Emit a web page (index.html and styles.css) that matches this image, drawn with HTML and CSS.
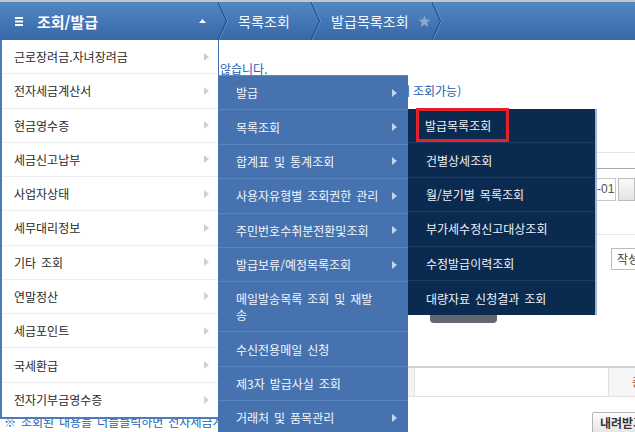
FILE: index.html
```html
<!DOCTYPE html>
<html lang="ko">
<head>
<meta charset="utf-8">
<title>조회/발급</title>
<link rel="stylesheet" href="styles.css">
</head>
<body>
<header class="topbar">
  <div class="menu-head">
    <svg class="burger" viewBox="0 0 8 9"><rect x="0" y="0" width="8" height="2"/><rect x="0" y="3.5" width="8" height="2"/><rect x="0" y="7" width="8" height="2"/></svg>
    <span class="menu-title">조회/발급</span>
    <svg class="caret" viewBox="0 0 7 4"><path d="M0 4L3.5 0L7 4z"/></svg>
  </div>
  <svg class="chev" viewBox="0 0 10 38"><polyline class="c1" points="0,0 8.5,19 0,38"/><polyline class="c2" points="1.2,0 9.7,19 1.2,38"/></svg>
  <span class="crumb crumb1">목록조회</span>
  <svg class="chev" viewBox="0 0 10 38"><polyline class="c1" points="0,0 8.5,19 0,38"/><polyline class="c2" points="1.2,0 9.7,19 1.2,38"/></svg>
  <span class="crumb crumb2">발급목록조회</span>
  <svg class="star" viewBox="0 0 20 20"><polygon points="10,0.8 12.6,7 19.4,7.3 14.1,11.6 15.9,18.4 10,14.6 4.1,18.4 5.9,11.6 0.6,7.3 7.4,7"/></svg>
  <svg class="chev" viewBox="0 0 10 38"><polyline class="c1" points="0,0 8.5,19 0,38"/><polyline class="c2" points="1.2,0 9.7,19 1.2,38"/></svg>
</header>

<div class="stage">
  <main class="page">
    <p class="msg msg1"><span class="lead">해당 자료는 조회되지</span><span class="tail">않습니다.</span></p>
    <p class="msg msg2"><span class="lead lead2">(발급일로부터 1년 이내</span><span class="tail tail2">조회가능)</span></p>
    <div class="form">
      <div class="f-gap1"></div>
      <div class="f-gap2"></div>
      <div class="f-date"><span class="date-input">2021-01-01</span><span class="cal-btn"></span></div>
      <div class="f-gap3"></div>
      <div class="f-sel">작성일자</div>
    </div>
    <div class="btn-row"><span class="dark-btn"></span></div>
    <div class="tbl-row"><span class="th1"></span><span class="td"></span><span class="th2">총</span></div>
    <div class="foot">
      <p class="note">※ 조회된 내용을 더블클릭하면 전자세금계산서 상세내역을 볼 수 있습니다.</p>
      <span class="dl">내려받기</span>
    </div>
  </main>

  <ul class="menu m1">
    <li><span class="txt">근로장려금.자녀장려금</span><svg class="arr" viewBox="0 0 5 8"><path d="M0 0L5 4L0 8z"/></svg></li>
    <li><span class="txt">전자세금계산서</span><svg class="arr" viewBox="0 0 5 8"><path d="M0 0L5 4L0 8z"/></svg></li>
    <li><span class="txt">현금영수증</span><svg class="arr" viewBox="0 0 5 8"><path d="M0 0L5 4L0 8z"/></svg></li>
    <li><span class="txt">세금신고납부</span><svg class="arr" viewBox="0 0 5 8"><path d="M0 0L5 4L0 8z"/></svg></li>
    <li><span class="txt">사업자상태</span><svg class="arr" viewBox="0 0 5 8"><path d="M0 0L5 4L0 8z"/></svg></li>
    <li><span class="txt">세무대리정보</span><svg class="arr" viewBox="0 0 5 8"><path d="M0 0L5 4L0 8z"/></svg></li>
    <li><span class="txt">기타 조회</span><svg class="arr" viewBox="0 0 5 8"><path d="M0 0L5 4L0 8z"/></svg></li>
    <li><span class="txt">연말정산</span><svg class="arr" viewBox="0 0 5 8"><path d="M0 0L5 4L0 8z"/></svg></li>
    <li><span class="txt">세금포인트</span><svg class="arr" viewBox="0 0 5 8"><path d="M0 0L5 4L0 8z"/></svg></li>
    <li><span class="txt">국세환급</span><svg class="arr" viewBox="0 0 5 8"><path d="M0 0L5 4L0 8z"/></svg></li>
    <li><span class="txt">전자기부금영수증</span><svg class="arr" viewBox="0 0 5 8"><path d="M0 0L5 4L0 8z"/></svg></li>
  </ul>

  <ul class="menu m2">
    <li><span class="txt">발급</span><svg class="arr" viewBox="0 0 5 8"><path d="M0 0L5 4L0 8z"/></svg></li>
    <li><span class="txt">목록조회</span><svg class="arr" viewBox="0 0 5 8"><path d="M0 0L5 4L0 8z"/></svg></li>
    <li><span class="txt">합계표 및 통계조회</span><svg class="arr" viewBox="0 0 5 8"><path d="M0 0L5 4L0 8z"/></svg></li>
    <li><span class="txt">사용자유형별 조회권한 관리</span><svg class="arr" viewBox="0 0 5 8"><path d="M0 0L5 4L0 8z"/></svg></li>
    <li><span class="txt">주민번호수취분전환및조회</span><svg class="arr" viewBox="0 0 5 8"><path d="M0 0L5 4L0 8z"/></svg></li>
    <li><span class="txt">발급보류/예정목록조회</span><svg class="arr" viewBox="0 0 5 8"><path d="M0 0L5 4L0 8z"/></svg></li>
    <li class="tall"><span class="txt wrap">메일발송목록 조회 및 재발<br>송</span></li>
    <li><span class="txt">수신전용메일 신청</span></li>
    <li><span class="txt">제3자 발급사실 조회</span></li>
    <li><span class="txt">거래처 및 품목관리</span><svg class="arr" viewBox="0 0 5 8"><path d="M0 0L5 4L0 8z"/></svg></li>
  </ul>

  <ul class="menu m3">
    <li class="sel"><span class="hl">발급목록조회</span></li>
    <li><span class="txt">건별상세조회</span></li>
    <li><span class="txt">월/분기별 목록조회</span></li>
    <li><span class="txt">부가세수정신고대상조회</span></li>
    <li><span class="txt">수정발급이력조회</span></li>
    <li><span class="txt">대량자료 신청결과 조회</span></li>
  </ul>
</div>
</body>
</html>
```

FILE: styles.css
```css
* { box-sizing: border-box; margin: 0; padding: 0; }

html, body {
  width: 635px;
  height: 432px;
  overflow: hidden;
  background: #fff;
}

body {
  font-family: "Noto Sans CJK KR", "Noto Sans", sans-serif;
  font-size: 12px;
  letter-spacing: 0;
  word-spacing: 1.6px;
  color: #333;
}

/* ---------- top bar ---------- */
.topbar {
  display: flex;
  align-items: center;
  height: 40px;
  border-top: 2px solid #c6c6c6;
  background: linear-gradient(#5187c5, #3767a7);
  color: #fff;
}

.menu-head {
  width: 218px;
  height: 100%;
  flex: none;
  display: flex;
  align-items: center;
  padding-left: 15px;
}

.burger { width: 8px; height: 9px; fill: #fff; margin-top: 1px; }

.menu-title {
  margin-left: 14px;
  font-size: 15px;
  font-weight: 700;
  letter-spacing: 0;
}

.caret { width: 7px; height: 4px; fill: #fff; margin-left: auto; margin-right: 12px; }

.chev { width: 10px; height: 38px; flex: none; }
.chev polyline { fill: none; }
.chev .c1 { stroke: #244f88; stroke-width: 1.3; }
.chev .c2 { stroke: #6897d0; stroke-width: 0.8; }

.crumb { font-size: 14px; letter-spacing: 0.1px; color: #f4f8fd; }
.crumb1 { margin: 0 21px 0 10px; }
.crumb2 { margin-left: 10px; }

.star { width: 13px; height: 13px; fill: #8aa7d0; margin: 0 1px 0 9px; flex: none; }

/* ---------- page behind menus ---------- */
.stage { position: relative; height: 392px; display: flow-root; }
.page { display: flow-root; }

.msg {
  display: flex;
  height: 14px;
  line-height: 14px;
  white-space: nowrap;
  color: #1b5bb0;
}
.msg1 { margin-top: 22px; }
.msg2 { margin-top: 8px; }
.lead { flex: 0 0 219px; text-align: right; overflow: hidden; }
.lead2 { flex-basis: 410px; }
.tail { margin-left: 1px; }
.tail2 { margin-left: 3px; }

.form { margin-left: 548px; }
.f-gap1 { height: 55px; border-bottom: 1px solid #e3e3e3; }
.f-gap2 { height: 16px; border-bottom: 1px solid #ababab; }
.f-date { display: flex; height: 23px; margin-top: 9px; }
.date-input {
  width: 80px;
  border: 1px solid #c9c9c9;
  padding-left: 4px;
  font: 12px/21px "Liberation Sans", Arial, sans-serif;
  letter-spacing: 0;
  color: #555;
}
.cal-btn {
  width: 20px;
  margin-left: 2px;
  border: 1px solid #bdbdbd;
  background: linear-gradient(#fafafa, #e4e4e4);
}
.f-gap3 { height: 34px; border-bottom: 1px solid #e6e6e6; }
.f-sel {
  width: 80px;
  height: 22px;
  margin: 13px 0 0 63px;
  border: 1px solid #bdbdbd;
  padding-left: 5px;
  font-size: 12px;
  line-height: 20px;
  color: #444;
}

.btn-row { margin: 30px 0 0 430px; height: 23px; }
.dark-btn {
  display: block;
  width: 67px;
  height: 23px;
  background: #63676f;
  border-radius: 0 0 4px 4px;
}

.tbl-row {
  display: flex;
  height: 31px;
  margin: 43px 0 0 380px;
  border-top: 2px solid #d2d2d2;
  border-bottom: 1px solid #e2e2e2;
}
.th1 { width: 35px; background: #f3f3f3; border-right: 1px solid #e3e3e3; }
.td { width: 193px; background: #fff; }
.th2 {
  flex: 1;
  background: #f5f5f5;
  border-left: 1px solid #e0e0e0;
  padding-left: 23px;
  color: #a0392c;
  font-size: 12px;
  line-height: 28px;
  white-space: nowrap;
  overflow: hidden;
}

.foot { display: flex; height: 21px; margin-top: 15px; }
.note {
  flex: 0 0 592px;
  padding: 3px 0 0 4px;
  font-size: 12px;
  line-height: 14px;
  color: #1d5fb6;
  white-space: nowrap;
  overflow: hidden;
}
.dl {
  flex: none;
  height: 21px;
  padding: 0 8px 0 7px;
  border: 1px solid #b5b5b5;
  border-radius: 2px;
  background: linear-gradient(#fdfdfd, #e6e6e6);
  font-size: 12px;
  font-weight: 700;
  line-height: 19px;
  color: #333;
  white-space: nowrap;
}

/* ---------- fly-out menus ---------- */
.menu { position: absolute; list-style: none; }
.menu li { display: flex; align-items: center; }
.menu .txt { flex: 1; white-space: nowrap; }
.arr { width: 5px; height: 8px; flex: none; }

.m1 {
  left: 0;
  top: 0;
  width: 219px;
  background: #fff;
  border-left: 2px solid #4a7bbb;
  border-right: 1px solid #3d6eae;
  border-bottom: 2px solid #4a7bbb;
}
.m1 li {
  height: 34.27px;
  padding: 0 9px 0 12px;
  border-bottom: 1px solid #eeeeee;
  color: #2a2a2a;
}
.m1 li:last-child { border-bottom: 0; }
.m1 .arr { fill: #cfcfcf; }

.m2 {
  left: 218px;
  top: 35px;
  width: 190px;
  background: #4673b0;
  border-top: 1px solid #5d89c3;
}
.m2 li {
  height: 34.4px;
  padding: 0 11px 0 18px;
  border-bottom: 1px solid #5884bf;
  color: #f3f6fb;
}
.m2 li.tall { height: 50px; }
.m2 .wrap { line-height: 16px; }
.m2 .arr { fill: #c5d4ea; }

.m3 {
  left: 408px;
  top: 69px;
  width: 189px;
  background: #0b2a50;
  border-right: 2px solid #9bb6da;
}
.m3 li {
  height: 34.4px;
  padding-left: 18px;
  border-bottom: 1px solid #1c3b63;
  color: #eef2f8;
}
.m3 li:last-child { border-bottom: 0; }
.m3 li.sel { padding-left: 8px; }
.hl {
  display: flex;
  align-items: center;
  height: 34px;
  margin-top: -1px;
  padding: 0 15px 0 6px;
  border: 3px solid #e3212b;
  white-space: nowrap;
}
```
